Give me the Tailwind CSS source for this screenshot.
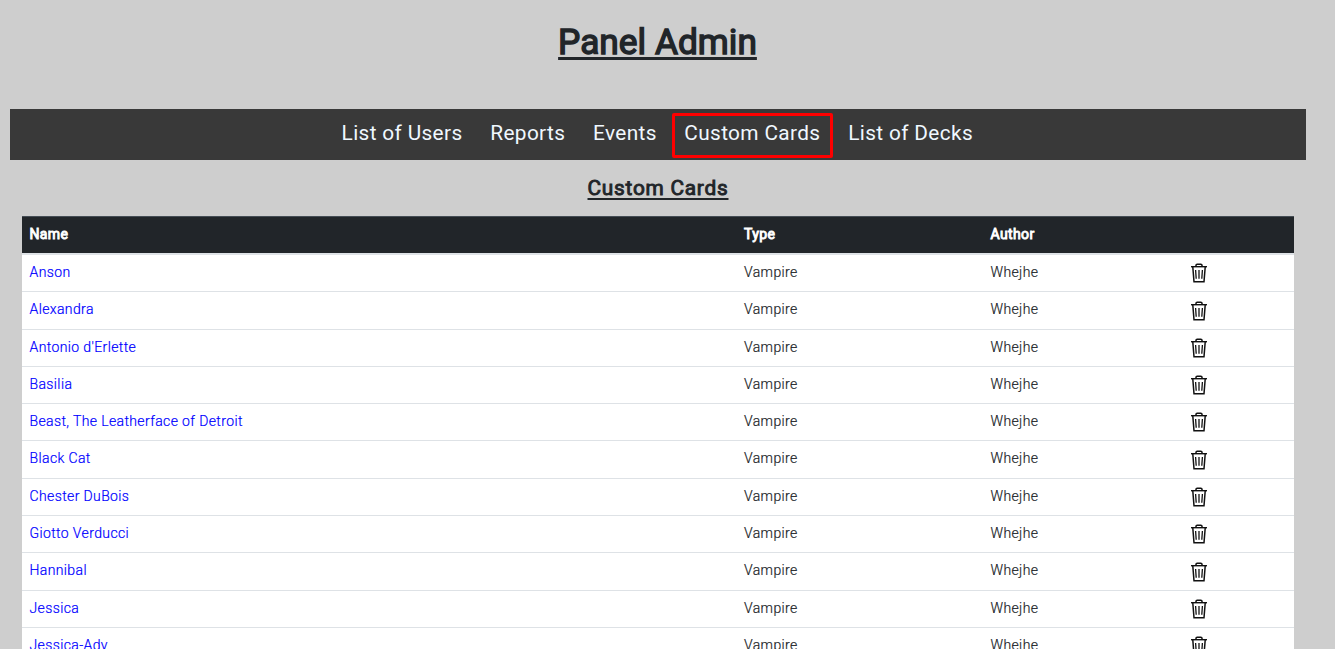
<!DOCTYPE html>
<html lang="en">
<head>
<meta charset="utf-8">
<title>Panel Admin</title>
<script src="https://cdn.jsdelivr.net/npm/@tailwindcss/browser@4"></script>
</head>
<body class="h-[649px] overflow-hidden bg-[#cecece] font-[Roboto,sans-serif] text-[#212529]">
<svg class="hidden"><symbol id="trash" viewBox="0 0 18 20"><g fill="none" stroke="#111"><path d="M1 3.7H17" stroke-width="1.4"/><path d="M6 3.5V2.2Q6 1.2 7.2 1.2H10.8Q12 1.2 12 2.2V3.5" stroke-width="1.5"/><path d="M2.8 4L4 18.7H14L15.2 4" stroke-width="1.5"/><path d="M5.6 7L6.2 15.7M9 7V15.7M12.4 7L11.8 15.7" stroke-width="1.3"/></g></symbol></svg>
<h1 class="ml-[9.5px] w-[1296px] pt-[21px] text-center text-[35.3px] leading-[43px] font-normal [-webkit-text-stroke:1.4px_#212529] underline decoration-[3px] underline-offset-[3px]">Panel Admin</h1>
<nav class="mt-[45px] ml-[10px] flex h-[51px] w-[1296px] justify-center bg-[#393939] pt-1 pr-[1.4px] text-[20.8px] leading-[38px] tracking-[0.36px] text-[#f0f8ff]">
<a class="mr-[27.8px] pt-px">List of Users</a><a class="mr-[27.8px] pt-px">Reports</a><a class="mr-[15px] pt-px">Events</a><a class="mr-[15.4px] h-[45px] rounded-[2px] border-[3px] border-[#ff0000] px-[9.5px] leading-[34px]">Custom Cards</a><a class="pt-px">List of Decks</a>
</nav>
<h2 class="ml-[10px] w-[1296px] pt-[15px] text-center text-[20.8px] leading-[26px] font-normal tracking-[0.77px] [-webkit-text-stroke:0.9px_#212529] underline decoration-2 underline-offset-[3px]">Custom Cards</h2>
<main class="mt-[15px] ml-[22px] w-[1272px] bg-white text-[14px] tracking-[0.38px]">
<div class="grid h-[38.92px] grid-cols-[714.5px_246.5px_200px_1fr] border-t border-b-2 border-t-[#454d55] border-b-[#dee2e6] bg-[#212529] pl-[7.5px] leading-[35px] font-normal [-webkit-text-stroke:0.9px_#fff] text-white"><span>Name</span><span>Type</span><span>Author</span></div>
<div id="rows"></div>
</main>
<script>
const names = ["Anson", "Alexandra", "Antonio d'Erlette", "Basilia", "Beast, The Leatherface of Detroit", "Black Cat", "Chester DuBois", "Giotto Verducci", "Hannibal", "Jessica", "Jessica-Ady"];
document.getElementById("rows").innerHTML = names.map(n => `<div class="grid h-[37.3px] grid-cols-[714.5px_246.5px_200px_1fr] border-b border-[#dee2e6] pl-[7.5px] leading-[35px] font-light [-webkit-text-stroke:0.2px_currentColor]"><a class="text-[#0000ff]">${n}</a><span>Vampire</span><span>Whejhe</span><span><svg class="mt-[8.4px] -ml-[0.5px] h-[20px] w-[18px]"><use href="#trash"/></svg></span></div>`).join("");
</script>
</body>
</html>
